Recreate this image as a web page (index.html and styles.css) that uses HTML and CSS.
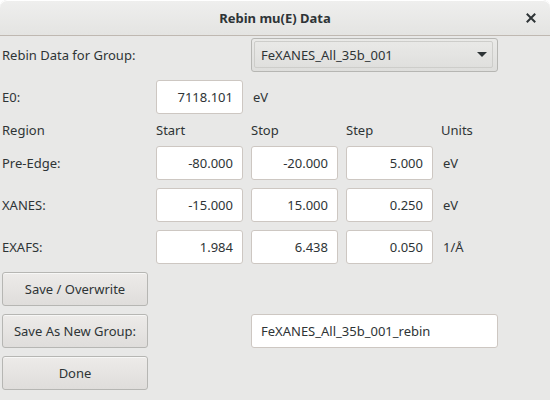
FILE: index.html
```html
<!DOCTYPE html>
<html>
<head>
<meta charset="utf-8">
<link rel="stylesheet" href="styles.css">
</head>
<body>
<div class="window">
  <div class="titlebar">
    <span class="title">Rebin mu(E) Data</span>
    <span class="close">
      <svg width="10" height="10" viewBox="0 0 10 10"><path d="M1.5 1.5 L8.5 8.5 M8.5 1.5 L1.5 8.5" stroke="#2e3436" stroke-width="2" stroke-linecap="square"/></svg>
    </span>
  </div>
  <div class="content">
    <div class="label">Rebin Data for Group:</div>
    <div class="spacer"></div>
    <div class="combo span3">
      <div class="combo-inner">
        <span>FeXANES_All_35b_001</span>
        <span class="arrow"></span>
      </div>
    </div>

    <div class="label">E0:</div>
    <div class="entry">7118.101</div>
    <div class="unit">eV</div>
    <div class="spacer span2"></div>

    <div class="label small">Region</div>
    <div class="label small">Start</div>
    <div class="label small">Stop</div>
    <div class="label small">Step</div>
    <div class="label small">Units</div>

    <div class="label">Pre-Edge:</div>
    <div class="entry">-80.000</div>
    <div class="entry">-20.000</div>
    <div class="entry">5.000</div>
    <div class="unit">eV</div>

    <div class="label">XANES:</div>
    <div class="entry">-15.000</div>
    <div class="entry">15.000</div>
    <div class="entry">0.250</div>
    <div class="unit">eV</div>

    <div class="label">EXAFS:</div>
    <div class="entry">1.984</div>
    <div class="entry">6.438</div>
    <div class="entry">0.050</div>
    <div class="unit">1/Å</div>

    <div class="button">Save / Overwrite</div>
    <div class="spacer span4"></div>

    <div class="button">Save As New Group:</div>
    <div class="spacer"></div>
    <div class="entry left span3">FeXANES_All_35b_001_rebin</div>

    <div class="button">Done</div>
    <div class="spacer span4"></div>
  </div>
</div>
</body>
</html>
```

FILE: styles.css
```css
html, body {
  margin: 0;
  padding: 0;
  background: #ffffff;
}
body {
  font-family: "Noto Sans", "Open Sans", sans-serif;
  font-size: 13px;
  color: #2e3436;
}
.window {
  width: 550px;
  height: 400px;
  background: #e8e8e7;
  border-radius: 7px 7px 0 0;
  overflow: hidden;
  box-sizing: border-box;
}
.titlebar {
  height: 35px;
  border-bottom: 1px solid #bfb8b1;
  background: linear-gradient(#efefee, #e4e4e2);
  display: flex;
  align-items: center;
  justify-content: center;
  position: relative;
  border-radius: 7px 7px 0 0;
  box-shadow: inset 0 1px 0 #ffffff;
}
.title {
  font-weight: bold;
  font-size: 13px;
  color: #2e3436;
}
.close {
  position: absolute;
  right: 14px;
  top: 13px;
  width: 10px;
  height: 10px;
  display: flex;
}
.content {
  padding: 2px;
  display: grid;
  grid-template-columns: 146px 87px 87px 87px 57px;
  grid-template-rows: 34px 34px 16px;
  grid-auto-rows: 34px;
  column-gap: 8px;
  row-gap: 8px;
}
.span2 { grid-column: span 2; }
.span3 { grid-column: span 3; }
.span4 { grid-column: span 4; }
.label {
  display: flex;
  align-items: center;
  white-space: nowrap;
}
.small { line-height: 16px; }
.unit {
  display: flex;
  align-items: center;
  padding-left: 2px;
  white-space: nowrap;
}
.entry {
  background: #ffffff;
  border: 1px solid #cdc7c2;
  border-radius: 3px;
  box-sizing: border-box;
  display: flex;
  align-items: center;
  justify-content: flex-end;
  padding: 0 9px;
  color: #2e3436;
  white-space: nowrap;
}
.entry.left {
  justify-content: flex-start;
}
.button {
  border: 1px solid #b6b6b3;
  border-radius: 3px;
  background: linear-gradient(#edebe9, #dfdddb);
  box-shadow: inset 0 1px 0 #f7f7f6;
  display: flex;
  align-items: center;
  justify-content: center;
  box-sizing: border-box;
  white-space: nowrap;
}
.combo {
  border: 1px solid #b6b6b3;
  border-radius: 3px;
  background: linear-gradient(#eaeae8, #dededc);
  box-sizing: border-box;
  padding: 2px 4px 3px 2px;
  display: flex;
}
.combo-inner {
  flex: 1;
  border: 1px solid #cdcdca;
  border-radius: 2px;
  display: flex;
  align-items: center;
  justify-content: space-between;
  padding: 0 5px 0 6px;
}
.arrow {
  width: 0;
  height: 0;
  border-left: 5px solid transparent;
  border-right: 5px solid transparent;
  border-top: 5px solid #2e3436;
}
```
